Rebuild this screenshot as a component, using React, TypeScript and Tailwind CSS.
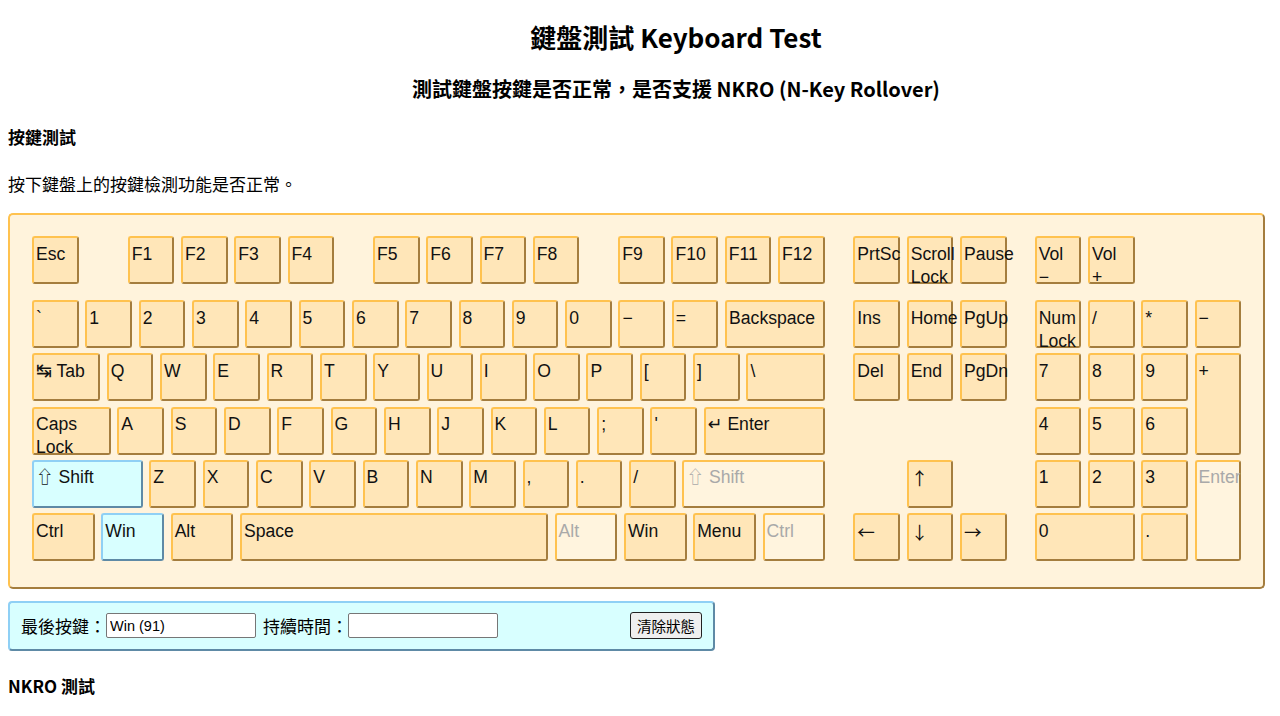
import React from "react";

type KState = "n" | "a" | "d";

const U1 = "w-[46.67px]";

function Key({
  label,
  w = U1,
  h = "h-[48px]",
  s = "n",
  cls = "",
}: {
  label: React.ReactNode;
  w?: string;
  h?: string;
  s?: KState;
  cls?: string;
}) {
  const base =
    "shrink-0 rounded-[3px] border-2 border-solid pl-[2px] pr-[2px] pt-[4.5px] text-[17.6px] leading-[23px] whitespace-pre-line break-normal";
  const st =
    s === "a"
      ? "bg-[#d8ffff] border-t-[#8fd0f5] border-l-[#8fd0f5] border-r-[#5e8aa6] border-b-[#5e8aa6] text-[#111]"
      : s === "d"
      ? "bg-[#fff4de] border-t-[#ffc24f] border-l-[#ffc24f] border-r-[#a47d3e] border-b-[#a47d3e] text-[#a9a9a9]"
      : "bg-[#ffe6b8] border-t-[#ffc24f] border-l-[#ffc24f] border-r-[#a47d3e] border-b-[#a47d3e] text-[#111]";
  return <div className={`${base} ${st} ${w} ${h} ${cls}`}>{label}</div>;
}

function Sym({ c, cls = "text-[18px]", lh = "leading-[1]" }: { c: string; cls?: string; lh?: string }) {
  return <span className={`font-['Noto_Sans_CJK_TC','DejaVu_Sans',sans-serif] ${lh} ${cls}`}>{c}</span>;
}

function TabLabel() {
  return (
    <span>
      <span className="font-['DejaVu_Sans'] text-[19px] leading-[1]">↹</span> Tab
    </span>
  );
}
function ShiftLabel() {
  return (
    <span>
      <Sym c="⇧" cls="text-[17.6px]" /> Shift
    </span>
  );
}
function EnterLabel() {
  return (
    <span>
      <Sym c="↵" cls="text-[17.6px]" /> Enter
    </span>
  );
}
const Arrow = ({ c }: { c: string }) => <Sym c={c} cls="text-[17.6px]" lh="leading-[23px]" />;

function Row({ children, cls = "" }: { children: React.ReactNode; cls?: string }) {
  return <div className={`flex gap-x-[6.67px] ${cls}`}>{children}</div>;
}

function MainBlock() {
  const num = ["`", "1", "2", "3", "4", "5", "6", "7", "8", "9", "0", "−", "="];
  const q = ["Q", "W", "E", "R", "T", "Y", "U", "I", "O", "P", "[", "]"];
  const a = ["A", "S", "D", "F", "G", "H", "J", "K", "L", ";", "'"];
  const z = ["Z", "X", "C", "V", "B", "N", "M", ",", ".", "/"];
  return (
    <div className="flex w-[793.33px] flex-col">
      <Row>
        <Key label="Esc" />
        <Key label="F1" cls="ml-[42.33px]" />
        <Key label="F2" />
        <Key label="F3" />
        <Key label="F4" />
        <Key label="F5" cls="ml-[32px]" />
        <Key label="F6" />
        <Key label="F7" />
        <Key label="F8" />
        <Key label="F9" cls="ml-[32px]" />
        <Key label="F10" />
        <Key label="F11" />
        <Key label="F12" />
      </Row>
      <div className="mt-[16px] flex flex-col gap-y-[5.33px]">
        <Row>
          {num.map((k) => (
            <Key key={k} label={k} />
          ))}
          <Key label="Backspace" w="w-[100px]" />
        </Row>
        <Row>
          <Key label={<TabLabel />} w="w-[68px]" />
          {q.map((k) => (
            <Key key={k} label={k} />
          ))}
          <Key label="\" w="w-[78.67px]" />
        </Row>
        <Row>
          <Key label={"Caps\nLock"} w="w-[78.67px]" />
          {a.map((k) => (
            <Key key={k} label={k} />
          ))}
          <Key label={<EnterLabel />} w="w-[121.33px]" />
        </Row>
        <Row>
          <Key label={<ShiftLabel />} w="w-[110.67px]" s="a" />
          {z.map((k) => (
            <Key key={k} label={k} />
          ))}
          <Key label={<ShiftLabel />} w="w-[142.67px]" s="d" />
        </Row>
        <Row>
          <Key label="Ctrl" w="w-[62.67px]" />
          <Key label="Win" w="w-[62.67px]" s="a" />
          <Key label="Alt" w="w-[62.67px]" />
          <Key label="Space" w="w-[308px]" />
          <Key label="Alt" w="w-[62.67px]" s="d" />
          <Key label="Win" w="w-[62.67px]" />
          <Key label="Menu" w="w-[62.67px]" />
          <Key label="Ctrl" w="w-[62.67px]" s="d" />
        </Row>
      </div>
    </div>
  );
}

function NavBlock() {
  return (
    <div className="flex w-[153.33px] flex-col">
      <Row>
        <Key label="PrtSc" />
        <Key label={"Scroll\nLock"} />
        <Key label="Pause" />
      </Row>
      <div className="mt-[16px] flex flex-col gap-y-[5.33px]">
        <Row>
          <Key label="Ins" />
          <Key label="Home" />
          <Key label="PgUp" />
        </Row>
        <Row>
          <Key label="Del" />
          <Key label="End" />
          <Key label="PgDn" />
        </Row>
        <div className="h-[48px]" />
        <Row>
          <Key label={<Arrow c="↑" />} cls="ml-[53.33px]" />
        </Row>
        <Row>
          <Key label={<Arrow c="←" />} />
          <Key label={<Arrow c="↓" />} />
          <Key label={<Arrow c="→" />} />
        </Row>
      </div>
    </div>
  );
}

function NumBlock() {
  return (
    <div className="flex w-[206.67px] flex-col">
      <Row>
        <Key label={"Vol\n−"} />
        <Key label={"Vol\n+"} />
      </Row>
      <div className="mt-[16px] grid grid-cols-[repeat(4,46.67px)] grid-rows-[repeat(5,48px)] gap-x-[6.67px] gap-y-[5.33px]">
        <Key label={"Num\nLock"} />
        <Key label="/" />
        <Key label="*" />
        <Key label="−" />
        <Key label="7" />
        <Key label="8" />
        <Key label="9" />
        <Key label="+" h="h-full" cls="row-span-2" />
        <Key label="4" />
        <Key label="5" />
        <Key label="6" />
        <Key label="1" />
        <Key label="2" />
        <Key label="3" />
        <Key label="Enter" h="h-full" cls="row-span-2" s="d" />
        <Key label="0" w="w-full" cls="col-span-2" />
        <Key label="." />
      </div>
    </div>
  );
}

export default function App() {
  return (
    <div className="min-h-[716px] bg-white px-[8px] pb-[8px] font-['Noto_Sans_CJK_TC',sans-serif] text-black">
      <h1 className="m-0 w-[1280px] -ml-[8px] pl-[72px] pt-[19px] text-center text-[26px] font-bold leading-[36px]">
        鍵盤測試 Keyboard Test
      </h1>
      <h2 className="m-0 mt-[20px] w-[1280px] -ml-[8px] pl-[72px] text-center text-[20px] font-bold leading-[28px]">
        測試鍵盤按鍵是否正常，是否支援 NKRO (N-Key Rollover)
      </h2>
      <h3 className="m-0 mt-[22px] text-[17px] font-bold leading-[24px]">按鍵測試</h3>
      <p className="m-0 mt-[23px] text-[17px] leading-[24px]">按下鍵盤上的按鍵檢測功能是否正常。</p>

      <div className="mt-[17px] w-fit rounded-[5px] border-2 border-solid border-t-[#ffc24f] border-l-[#ffc24f] border-r-[#a47d3e] border-b-[#a47d3e] bg-[#fff3dc] pb-[25.5px] pl-[22px] pr-[22px] pt-[21px] font-['Liberation_Sans','DejaVu_Sans',sans-serif]">
        <div className="flex gap-x-[28px]">
          <MainBlock />
          <NavBlock />
          <NumBlock />
        </div>
      </div>

      <div className="mt-[12px] flex h-[50px] w-[707px] items-center rounded-[4px] border-2 border-solid border-t-[#8fd0f5] border-l-[#8fd0f5] border-r-[#5e8aa6] border-b-[#5e8aa6] bg-[#d8ffff] pl-[11px] pr-[11px]">
        <span className="text-[17px] leading-[24px]">最後按鍵：</span>
        <input
          readOnly
          value="Win (91)"
          className="h-[25px] w-[150px] rounded-[2px] border border-solid border-[#767676] bg-white px-[3px] font-['Liberation_Sans',sans-serif] text-[14.5px] text-black outline-none"
        />
        <span className="ml-[7px] text-[17px] leading-[24px]">持續時間：</span>
        <input
          readOnly
          value=""
          className="h-[25px] w-[150px] rounded-[2px] border border-solid border-[#767676] bg-white px-[3px] font-['Liberation_Sans',sans-serif] text-[14.5px] text-black outline-none"
        />
        <button className="ml-auto h-[27px] rounded-[3px] border border-solid border-[#222] bg-[#efefef] px-[6px] text-[14.5px] leading-[20px] text-black">
          清除狀態
        </button>
      </div>

      <h3 className="m-0 mt-[23px] text-[17px] font-bold leading-[24px]">NKRO 測試</h3>
    </div>
  );
}
